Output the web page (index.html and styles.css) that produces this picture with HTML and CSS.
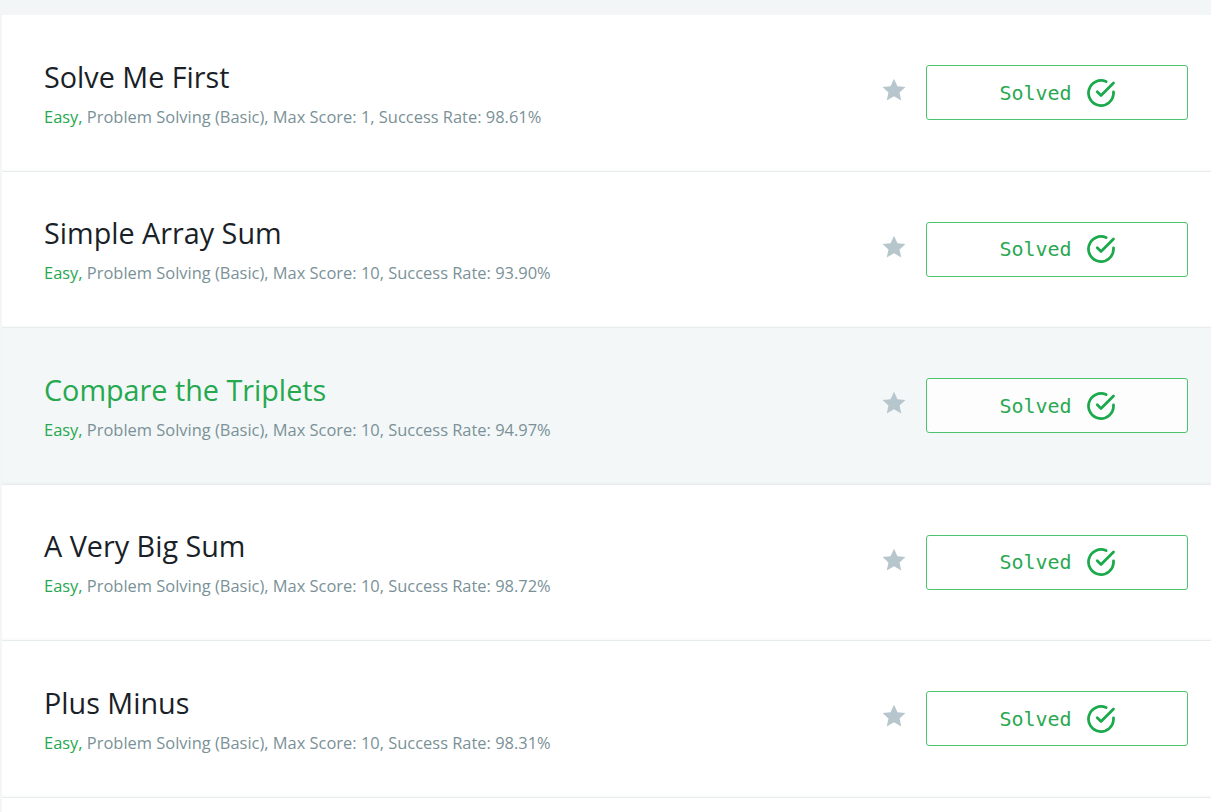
FILE: index.html
```html
<!DOCTYPE html>
<html>
<head>
<meta charset="utf-8">
<link rel="stylesheet" href="styles.css">
</head>
<body>
<div class="list">
  <div class="row">
    <div class="info">
      <div class="title">Solve Me First</div>
      <div class="meta"><span class="easy">Easy,</span> Problem Solving (Basic), Max Score: 1, Success Rate: 98.61%</div>
    </div>
    <div class="actions">
      <svg class="star" viewBox="0 0 24 24"><path d="M12 1.6l3.2 6.9 7.4.8-5.5 5 1.6 7.3L12 17.8l-6.7 3.8 1.6-7.3-5.5-5 7.4-.8z"/></svg>
      <div class="btn">Solved <svg class="check" viewBox="0 0 24 24"><path d="M22 11.08V12a10 10 0 1 1-5.930-9.14"/><polyline points="22 4 12 14.01 9 11.01"/></svg></div>
    </div>
  </div>
  <div class="row">
    <div class="info">
      <div class="title">Simple Array Sum</div>
      <div class="meta"><span class="easy">Easy,</span> Problem Solving (Basic), Max Score: 10, Success Rate: 93.90%</div>
    </div>
    <div class="actions">
      <svg class="star" viewBox="0 0 24 24"><path d="M12 1.6l3.2 6.9 7.4.8-5.5 5 1.6 7.3L12 17.8l-6.7 3.8 1.6-7.3-5.5-5 7.4-.8z"/></svg>
      <div class="btn">Solved <svg class="check" viewBox="0 0 24 24"><path d="M22 11.08V12a10 10 0 1 1-5.93-9.14"/><polyline points="22 4 12 14.01 9 11.01"/></svg></div>
    </div>
  </div>
  <div class="row hover">
    <div class="info">
      <div class="title">Compare the Triplets</div>
      <div class="meta"><span class="easy">Easy,</span> Problem Solving (Basic), Max Score: 10, Success Rate: 94.97%</div>
    </div>
    <div class="actions">
      <svg class="star" viewBox="0 0 24 24"><path d="M12 1.6l3.2 6.9 7.4.8-5.5 5 1.6 7.3L12 17.8l-6.7 3.8 1.6-7.3-5.5-5 7.4-.8z"/></svg>
      <div class="btn">Solved <svg class="check" viewBox="0 0 24 24"><path d="M22 11.08V12a10 10 0 1 1-5.93-9.14"/><polyline points="22 4 12 14.01 9 11.01"/></svg></div>
    </div>
  </div>
  <div class="row">
    <div class="info">
      <div class="title">A Very Big Sum</div>
      <div class="meta"><span class="easy">Easy,</span> Problem Solving (Basic), Max Score: 10, Success Rate: 98.72%</div>
    </div>
    <div class="actions">
      <svg class="star" viewBox="0 0 24 24"><path d="M12 1.6l3.2 6.9 7.4.8-5.5 5 1.6 7.3L12 17.8l-6.7 3.8 1.6-7.3-5.5-5 7.4-.8z"/></svg>
      <div class="btn">Solved <svg class="check" viewBox="0 0 24 24"><path d="M22 11.08V12a10 10 0 1 1-5.93-9.14"/><polyline points="22 4 12 14.01 9 11.01"/></svg></div>
    </div>
  </div>
  <div class="row">
    <div class="info">
      <div class="title">Plus Minus</div>
      <div class="meta"><span class="easy">Easy,</span> Problem Solving (Basic), Max Score: 10, Success Rate: 98.31%</div>
    </div>
    <div class="actions">
      <svg class="star" viewBox="0 0 24 24"><path d="M12 1.6l3.2 6.9 7.4.8-5.5 5 1.6 7.3L12 17.8l-6.7 3.8 1.6-7.3-5.5-5 7.4-.8z"/></svg>
      <div class="btn">Solved <svg class="check" viewBox="0 0 24 24"><path d="M22 11.08V12a10 10 0 1 1-5.93-9.14"/><polyline points="22 4 12 14.01 9 11.01"/></svg></div>
    </div>
  </div>
  <div class="row"></div>
</div>
</body>
</html>
```
FILE: styles.css
```css
html, body {
  margin: 0;
  padding: 0;
  background: #f3f6f7;
  overflow: hidden;
  height: 812px;
}
body {
  font-family: "Open Sans", "Noto Sans", sans-serif;
}
.list {
  padding-top: 15px;
  margin-left: 2px;
}
.row {
  box-sizing: border-box;
  height: 156.5px;
  background: #fff;
  border-bottom: 1px solid #e7ecee;
  box-shadow: inset 0 -3px 3px -2px rgba(0, 0, 0, 0.03);
  display: flex;
  align-items: center;
  justify-content: space-between;
  padding: 0 23px 0 42px;
}
.row.hover {
  background: #f3f7f7;
}
.info {
  display: flex;
  flex-direction: column;
  padding-top: 2px;
}
.title {
  font-size: 28.75px;
  line-height: 34px;
  color: #1a1f28;
}
.hover .title {
  color: #26a84f;
}
.meta {
  font-size: 16.45px;
  line-height: 22px;
  margin-top: 12px;
  color: #7a9197;
}
.easy {
  color: #26a84f;
}
.actions {
  display: flex;
  align-items: center;
  gap: 19px;
}
.star {
  width: 26px;
  height: 26px;
  fill: #b7c6cc;
  margin-bottom: 5px;
}
.btn {
  box-sizing: border-box;
  width: 262px;
  height: 55px;
  border: 1px solid #4cc46f;
  border-radius: 3px;
  background: #fff;
  display: flex;
  align-items: center;
  justify-content: center;
  gap: 14px;
  font-family: "DejaVu Sans Mono", "Liberation Mono", monospace;
  font-size: 20px;
  color: #2aa851;
  padding-left: 1px;
}
.hover .btn {
  background: #fdfdfd;
}
.check {
  width: 30px;
  height: 30px;
  fill: none;
  stroke: #1ba94c;
  stroke-width: 2.2;
  stroke-linecap: round;
  stroke-linejoin: round;
}
```
